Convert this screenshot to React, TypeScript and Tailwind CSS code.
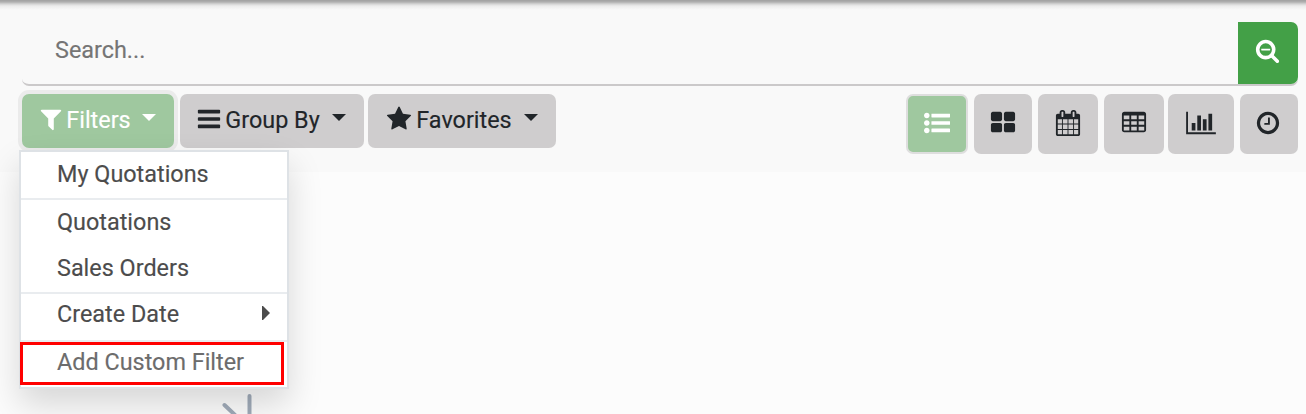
import type { ReactNode } from "react";

const paths = {
  filter:
    "M1595 295q17 41-14 70l-493 493v742q0 42-39 59-13 5-25 5-27 0-45-19l-256-256q-19-19-19-45v-486l-493-493q-31-29-14-70 17-39 59-39h1280q42 0 59 39z",
  bars: "M1664 1344v128q0 26-19 45t-45 19h-1408q-26 0-45-19t-19-45v-128q0-26 19-45t45-19h1408q26 0 45 19t19 45zm0-512v128q0 26-19 45t-45 19h-1408q-26 0-45-19t-19-45v-128q0-26 19-45t45-19h1408q26 0 45 19t19 45zm0-512v128q0 26-19 45t-45 19h-1408q-26 0-45-19t-19-45v-128q0-26 19-45t45-19h1408q26 0 45 19t19 45z",
  star: "M1728 647q0 22-26 48l-363 354 86 500q1 7 1 20 0 21-10.5 35.5t-30.5 14.5q-19 0-40-12l-449-236-449 236q-22 12-40 12-21 0-31.5-14.5t-10.5-35.5q0-6 2-20l86-500-364-354q-25-27-25-48 0-37 56-46l502-73 225-455q19-41 49-41t49 41l225 455 502 73q56 9 56 46z",
  large:
    "M832 1024v384q0 52-38 90t-90 38h-512q-52 0-90-38t-38-90v-384q0-52 38-90t90-38h512q52 0 90 38t38 90zm0-768v384q0 52-38 90t-90 38h-512q-52 0-90-38t-38-90v-384q0-52 38-90t90-38h512q52 0 90 38t38 90zm896 768v384q0 52-38 90t-90 38h-512q-52 0-90-38t-38-90v-384q0-52 38-90t90-38h512q52 0 90 38t38 90zm0-768v384q0 52-38 90t-90 38h-512q-52 0-90-38t-38-90v-384q0-52 38-90t90-38h512q52 0 90 38t38 90z",
  list: "M384 1408q0 80-56 136t-136 56-136-56-56-136 56-136 136-56 136 56 56 136zm0-512q0 80-56 136t-136 56-136-56-56-136 56-136 136-56 136 56 56 136zm1408 416v192q0 13-9.5 22.5t-22.5 9.5h-1216q-13 0-22.5-9.5t-9.5-22.5v-192q0-13 9.5-22.5t22.5-9.5h1216q13 0 22.5 9.5t9.5 22.5zm-1408-928q0 80-56 136t-136 56-136-56-56-136 56-136 136-56 136 56 56 136zm1408 416v192q0 13-9.5 22.5t-22.5 9.5h-1216q-13 0-22.5-9.5t-9.5-22.5v-192q0-13 9.5-22.5t22.5-9.5h1216q13 0 22.5 9.5t9.5 22.5zm0-512v192q0 13-9.5 22.5t-22.5 9.5h-1216q-13 0-22.5-9.5t-9.5-22.5v-192q0-13 9.5-22.5t22.5-9.5h1216q13 0 22.5 9.5t9.5 22.5z",
  calendar:
    "M192 1664h288v-288h-288v288zm352 0h320v-288h-320v288zm-352-352h288v-320h-288v320zm352 0h320v-320h-320v320zm-352-384h288v-288h-288v288zm736 736h320v-288h-320v288zm-384-736h320v-288h-320v288zm768 736h288v-288h-288v288zm-384-352h320v-320h-320v320zm-352-864v-288q0-13-9.5-22.5t-22.5-9.5h-64q-13 0-22.5 9.5t-9.5 22.5v288q0 13 9.5 22.5t22.5 9.5h64q13 0 22.5-9.5t9.5-22.5zm736 864h288v-320h-288v320zm-384-384h320v-288h-320v288zm384 0h288v-288h-288v288zm32-480v-288q0-13-9.5-22.5t-22.5-9.5h-64q-13 0-22.5 9.5t-9.5 22.5v288q0 13 9.5 22.5t22.5 9.5h64q13 0 22.5-9.5t9.5-22.5zm384-64v1280q0 52-38 90t-90 38h-1408q-52 0-90-38t-38-90v-1280q0-52 38-90t90-38h128v-96q0-66 47-113t113-47h64q66 0 113 47t47 113v96h384v-96q0-66 47-113t113-47h64q66 0 113 47t47 113v96h128q52 0 90 38t38 90z",
  table:
    "M224 128h1344q66 0 113 47t47 113v1088q0 66-47 113t-113 47h-1344q-66 0-113-47t-47-113v-1088q0-66 47-113t113-47zM192 384v256h384v-256zM704 384v256h384v-256zM1216 384v256h384v-256zM192 768v256h384v-256zM704 768v256h384v-256zM1216 768v256h384v-256zM192 1152v256h384v-256zM704 1152v256h384v-256zM1216 1152v256h384v-256z",
  chart:
    "M640 896v512h-256v-512h256zm384-512v1024h-256v-1024h256zm1024 1152v128h-2048v-1536h128v1408h1920zm-640-896v768h-256v-768h256zm384-384v1152h-256v-1152h256z",
  clock:
    "M1024 544v448q0 14-9 23t-23 9h-320q-14 0-23-9t-9-23v-64q0-14 9-23t23-9h224v-352q0-14 9-23t23-9h64q14 0 23 9t9 23zm416 352q0-148-73-273t-198-198-273-73-273 73-198 198-73 273 73 273 198 198 273 73 273-73 198-198 73-273zm224 0q0 209-103 385.5t-279.5 279.5-385.5 103-385.5-103-279.5-279.5-103-385.5 103-385.5 279.5-279.5 385.5-103 385.5 103 279.5 279.5 103 385.5z",
  searchMinus:
    "M1088 800v64q0 13-9.5 22.5t-22.5 9.5h-576q-13 0-22.5-9.5t-9.5-22.5v-64q0-13 9.5-22.5t22.5-9.5h576q13 0 22.5 9.5t9.5 22.5zm128 32q0-185-131.5-316.5t-316.5-131.5-316.5 131.5-131.5 316.5 131.5 316.5 316.5 131.5 316.5-131.5 131.5-316.5zm512 832q0 53-37.5 90.5t-90.5 37.5q-54 0-90-38l-343-342q-179 124-399 124-143 0-273.5-55.5t-225-150-150-225-55.5-273.5 55.5-273.5 150-225 225-150 273.5-55.5 273.5 55.5 225 150 150 225 55.5 273.5q0 220-124 399l343 343q37 37 37 90z",
};

function Icon({ name, className = "h-[26px] w-[26px]" }: { name: keyof typeof paths; className?: string }) {
  return (
    <svg
      viewBox={name === "chart" ? "0 0 2048 1792" : "0 0 1792 1792"}
      className={`shrink-0 overflow-visible fill-current ${className}`}
      aria-hidden="true"
    >
      <path d={paths[name]} fillRule="evenodd" />
    </svg>
  );
}

function Caret({ className }: { className: string }) {
  return (
    <svg viewBox="0 0 14 7" className={`h-[7px] w-[14px] shrink-0 fill-current ${className}`} aria-hidden="true">
      <path d="M0 0h14L7 7z" />
    </svg>
  );
}

function ViewButton({ name, className, icon }: { name: keyof typeof paths; className: string; icon?: string }) {
  return (
    <button className={`flex h-[60px] items-center justify-center rounded-[7px] bg-[#cfcdce] pb-[2px] ${className}`}>
      <Icon name={name} className={icon} />
    </button>
  );
}

function Item({ children, className }: { children: ReactNode; className: string }) {
  return <div className={`flex items-center pl-[36px] ${className}`}>{children}</div>;
}

export default function App() {
  return (
    <div className="relative h-[414px] w-[1306px] overflow-hidden bg-[#fcfcfc] font-['Roboto',sans-serif] text-[23.4px] leading-[28px] text-[#212529] [-webkit-text-stroke:0.15px_currentColor]">
      <header className="h-[172px] bg-[#f9f9f9]">
        <div className="h-[10px] bg-[linear-gradient(to_bottom,#a0a0a0_0px,#b0b0b0_2px,#d4d4d4_4px,#ececec_6px,#f9f9f9_10px)]" />
        <div className="mt-[12px] ml-[22px] flex h-[64px] w-[1276px] rounded-[7px] border-b-2 border-[#cbc9ca]">
          <div className="flex flex-1 items-center pb-[6px] pl-[33px] text-[#757575]">Search...</div>
          <button className="flex h-[62px] w-[60px] items-center justify-center rounded-r-[7px] bg-[#43a047] pr-px pb-[3px] text-white">
            <Icon name="searchMinus" className="mb-[2px] h-[25px] w-[25px]" />
          </button>
        </div>
        <div className="mt-[8px] flex items-start pr-[8px] pl-[22px]">
          <button className="flex h-[54px] w-[152px] items-center rounded-[7px] bg-[#9fc89f] pb-[2px] pl-[16px] text-white shadow-[0_0_0_4px_#ebebeb]">
            <Icon name="filter" className="mb-[2px] h-[26px] w-[26px]" />
            <span className="ml-[2px] w-[65px] whitespace-nowrap">Filters</span>
            <Caret className="mb-[6px] ml-[11px]" />
          </button>
          <button className="ml-[6px] flex h-[54px] w-[184px] items-center rounded-[7px] bg-[#cfcdce] pb-[2px] pl-[16px]">
            <Icon name="bars" className="mb-[2px] h-[26px] w-[26px]" />
            <span className="ml-[3px] w-[95px] whitespace-nowrap">Group By</span>
            <Caret className="mb-[6px] ml-[12px]" />
          </button>
          <button className="ml-[4px] flex h-[54px] w-[188px] items-center rounded-[7px] bg-[#cfcdce] pb-[2px] pl-[18px]">
            <Icon name="star" className="mb-[2px] h-[26px] w-[26px]" />
            <span className="ml-[4px] w-[96px] whitespace-nowrap">Favorites</span>
            <Caret className="mb-[6px] ml-[12px]" />
          </button>
          <div className="ml-auto flex">
            <ViewButton name="list" className="w-[62px] border-2 border-[#dedede] bg-[#9fc89f]! text-white" />
            <ViewButton name="large" className="ml-[6px] w-[58px]" />
            <ViewButton name="calendar" className="ml-[6px] w-[60px]" />
            <ViewButton name="table" className="ml-[6px] w-[60px] pr-px" />
            <ViewButton name="chart" className="ml-[4px] w-[66px]" icon="h-[26px] w-[30px]" />
            <ViewButton name="clock" className="ml-[6px] w-[58px] pr-[2px]" />
          </div>
        </div>
      </header>
      <svg viewBox="0 0 40 24" className="absolute top-[390px] left-[218px] h-[24px] w-[40px]" aria-hidden="true">
        <path d="M31.5 6v28M6.500 15l20 19" stroke="#a0abb9" strokeWidth="4" strokeLinecap="round" fill="none" />
      </svg>
      <div className="absolute top-[150px] left-[19px] h-[239px] w-[270px] border-2 border-[#dee2e6] bg-white text-[#4c4c4c] shadow-[0_16px_32px_rgba(0,0,0,0.15)]">
        <Item className="h-[46px] pb-[2px]">My Quotations</Item>
        <div className="h-[2px] bg-[#e9ecef]" />
        <Item className="h-[46px] pb-[2px]">Quotations</Item>
        <Item className="h-[46px] pb-[2px]">Sales Orders</Item>
        <div className="h-[2px] bg-[#e9ecef]" />
        <Item className="h-[46px] pb-[6px]">
          <span>Create Date</span>
          <svg viewBox="0 0 8 14" className="mr-[17px] mb-[2px] ml-auto h-[14px] w-[8px] fill-current" aria-hidden="true">
            <path d="M0 0l1 0 7 7-7 7h-1z" />
          </svg>
        </Item>
        <div className="h-[2px] bg-[#e9ecef]" />
        <Item className="h-[42px] pb-[2px] text-[#6c6c6c]">Add Custom Filter</Item>
      </div>
      <div className="absolute top-[342px] left-[20px] h-[43px] w-[264px] border-[3px] border-[#ff0000]" />
    </div>
  );
}
